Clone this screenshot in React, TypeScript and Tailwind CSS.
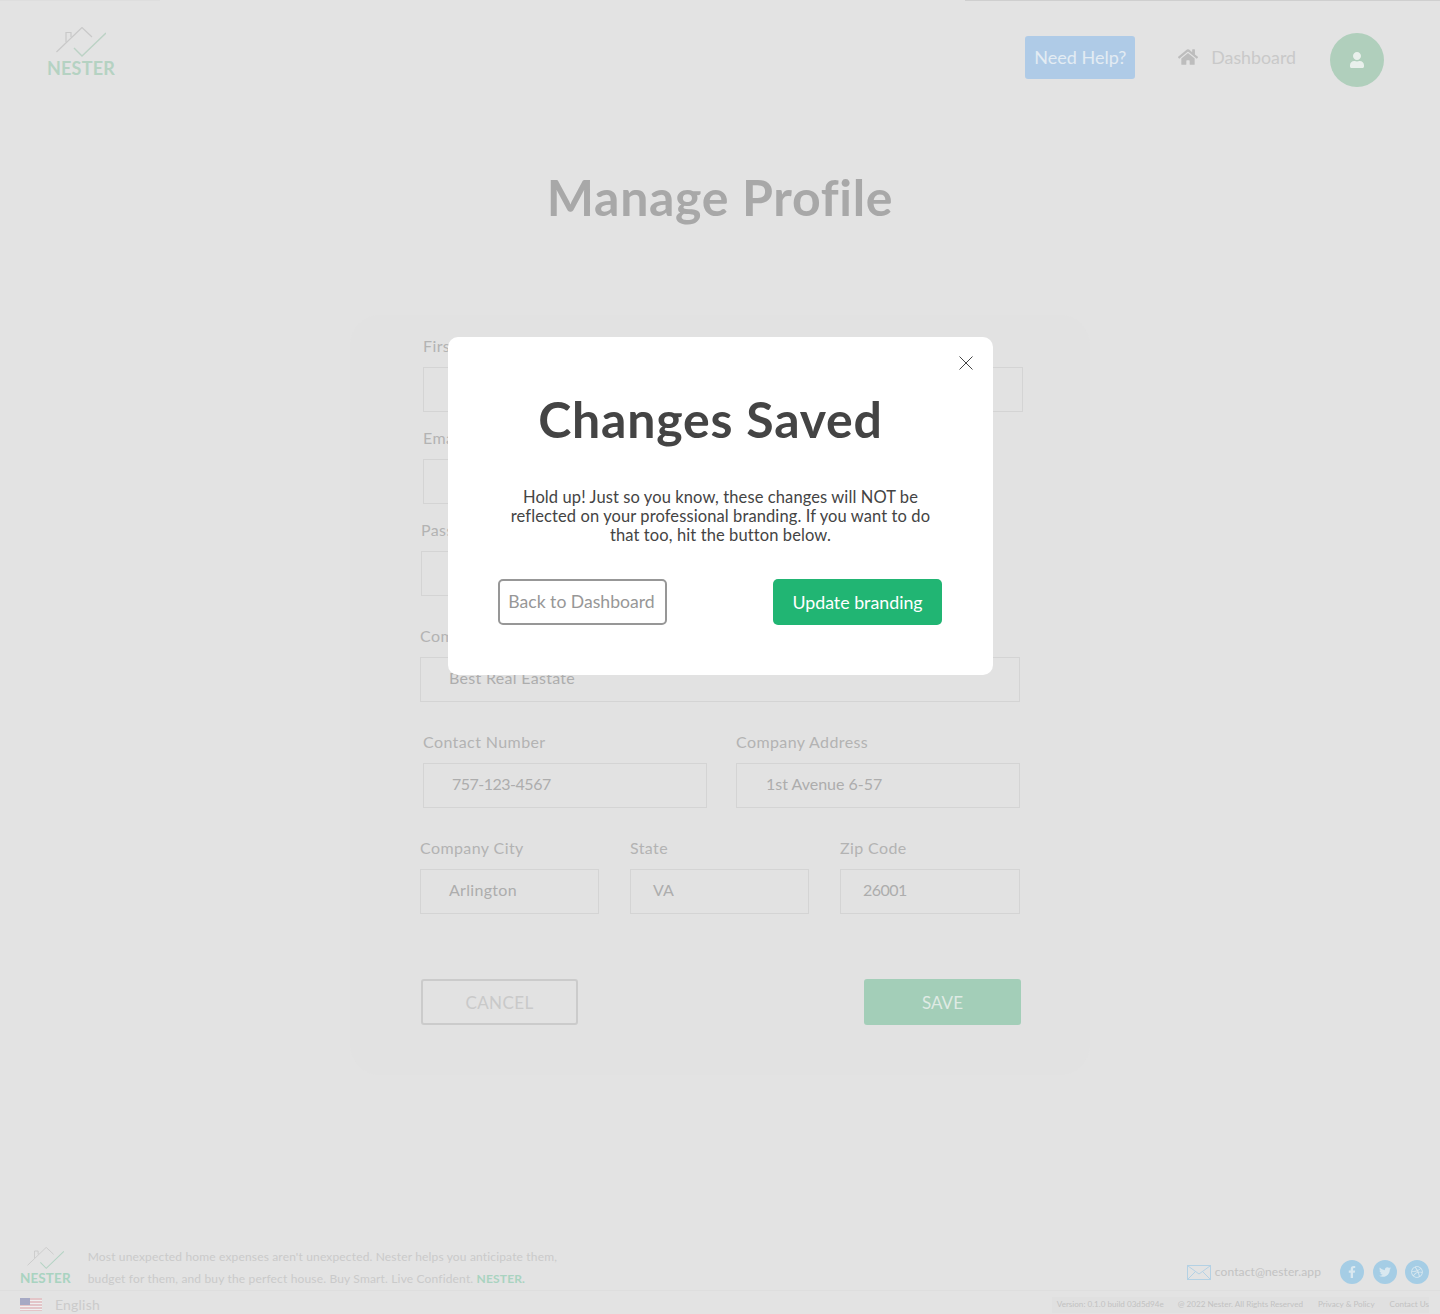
import React from 'react';
import { FaHome, FaUser, FaFacebookF, FaTwitter, FaDribbble } from 'react-icons/fa';

const Logo = ({ small }: { small?: boolean }) => (
  <div className="flex flex-col items-center">
    <svg
      viewBox="0 0 50 30"
      className={small ? 'h-[22px] w-[37px]' : 'h-[30px] w-[50px]'}
      fill="none"
      stroke="#c9c9c9"
      strokeWidth="1.2"
    >
      <path d="M0.5 25 L26 0.5 L36 10" />
      <path d="M10 15 V5.5 H15 V10" />
      <path d="M18 21 L26 29 L50 6" stroke={small ? '#b4d3c4' : '#bcd2c5'} strokeWidth="1.4" />
    </svg>
    <span
      className={
        small
          ? 'text-[13.5px] leading-[18px] font-bold tracking-[0.1px] text-[#a9d3c0]'
          : 'text-[18px] leading-[22px] font-bold tracking-[0.2px] text-[#b5d2c2]'
      }
    >
      NESTER
    </span>
  </div>
);

const Field = ({
  label,
  value,
  className,
  valueClassName,
}: {
  label: string;
  value?: string;
  className?: string;
  valueClassName?: string;
}) => (
  <div className={className}>
    <label className="block text-[16px] leading-[20px] tracking-[0.4px] text-[#b3b3b3]">{label}</label>
    <div
      className={
        'mt-[11px] flex h-[45px] items-center border border-[#d4d4d4] pb-[4px] text-[16px] text-[#adadad] ' +
        (valueClassName ?? 'pl-[28px] tracking-[0.3px]')
      }
    >
      {value}
    </div>
  </div>
);

const FlagIcon = () => (
  <svg viewBox="0 0 22 13" className="h-[13px] w-[22px]">
    <rect width="22" height="13" fill="#e3c5c8" />
    <path d="M0 2.5H22M0 5.5H22M0 8.5H22M0 11.5H22" stroke="#f0f0f0" strokeWidth="1" />
    <rect width="10" height="7" fill="#a6a9c4" />
  </svg>
);

const SocialDot = ({ children }: { children: React.ReactNode }) => (
  <span className="flex h-[24px] w-[24px] items-center justify-center rounded-full bg-[#a5cde5] text-[12px] text-[#d9e8f0]">
    {children}
  </span>
);

export default function App() {
  return (
    <div className="relative flex min-h-[1314px] flex-col overflow-hidden bg-[#e3e3e3] font-['Lato',sans-serif]">
      {/* Top edge lines */}
      <div className="flex h-px justify-between">
        <div className="w-[160px] bg-[#dedede]" />
        <div className="w-[475px] bg-[#cfcfcf]" />
      </div>

      {/* Header */}
      <header className="flex h-[119px] items-start justify-between pl-[47px] pr-[56px] pt-[26px]">
        <Logo />
        <div className="flex items-start">
          <button className="mt-[9px] h-[43px] w-[110px] rounded-[3px] bg-[#afcbe7] text-[18px] text-[#e3ecf3]">
            Need Help?
          </button>
          <div className="ml-[43px] mt-[18px] flex items-center gap-[13px] text-[17.8px] leading-[24px] text-[#c9c9c9]">
            <FaHome className="h-[20px] w-[20px] text-[#bdbdbd]" />
            Dashboard
          </div>
          <div className="ml-[34px] mt-[6px] flex h-[54px] w-[54px] items-center justify-center rounded-full bg-[#b0cfbc] text-[16px] text-[#e9f0ec]">
            <FaUser />
          </div>
        </div>
      </header>

      <h1 className="mt-[44px] text-center text-[50px] leading-[66px] font-bold tracking-[0.7px] text-[#a8a8a8]">
        Manage Profile
      </h1>

      {/* Profile form card */}
      <main className="mx-auto mt-[85px] h-[760px] w-[740px] rounded-[30px] bg-[#e2e2e2] pl-[70px] pr-[70px] pt-[21px]">
        <div className="ml-[3px] grid w-[600px] grid-cols-[284px_287px] gap-x-[29px]">
          <Field label="First Name" />
          <Field label="Last Name" />
        </div>
        <Field label="Email" className="ml-[3px] mt-[16px] w-[284px]" />
        <Field label="Password" className="ml-[1px] mt-[16px] w-[284px]" />
        <Field label="Company Name" value="Best Real Eastate" className="mt-[30px] w-[600px]" />
        <div className="ml-[3px] mt-[30px] grid w-[597px] grid-cols-2 gap-x-[29px]">
          <Field label="Contact Number" value="757-123-4567" valueClassName="pl-[28px] tracking-[-0.5px]" />
          <Field label="Company Address" value="1st Avenue 6-57" valueClassName="pl-[29px] tracking-[0px]" />
        </div>
        <div className="mt-[30px] grid w-[600px] grid-cols-[179px_179px_180px] gap-x-[31px]">
          <Field label="Company City" value="Arlington" />
          <Field label="State" value="VA" valueClassName="pl-[22px]" />
          <Field label="Zip Code" value="26001" valueClassName="pl-[22px] tracking-[-0.5px]" />
        </div>
        <div className="ml-[1px] mt-[65px] flex w-[600px] justify-between">
          <button className="h-[46px] w-[157px] rounded-[3px] border-2 border-[#cbcbcb] pt-[1px] text-[17px] tracking-[0.4px] text-[#c9c9c9]">
            CANCEL
          </button>
          <button className="h-[46px] w-[157px] rounded-[3px] bg-[#a3ceb8] pt-[1px] text-[17px] text-[#dfeae4]">
            SAVE
          </button>
        </div>
      </main>

      {/* Footer */}
      <footer className="mt-auto">
        <div className="flex h-[50px] items-start justify-between pl-[20px] pr-[11px]">
          <div className="flex items-start gap-[17px] pt-[6px]">
            <div className="pt-[1px]">
              <Logo small />
            </div>
            <p className="text-[12px] leading-[22px] tracking-[0.16px] text-[#cacaca]">
              Most unexpected home expenses aren't unexpected. Nester helps you anticipate them,
              <br />
              budget for them, and buy the perfect house. Buy Smart. Live Confident.{' '}
              <span className="font-bold text-[#a9d3c0]">NESTER.</span>
            </p>
          </div>
          <div className="flex items-center pt-[20px]">
            <svg viewBox="0 0 24 15" className="h-[15px] w-[24px]" fill="none" stroke="#b4d1e4" strokeWidth="1">
              <rect x="0.5" y="0.5" width="23" height="14" />
              <path d="M1 1 L12 9 L23 1 M1 14 L8 7 M23 14 L16 7" />
            </svg>
            <span className="ml-[4px] text-[12px] tracking-[0.1px] text-[#c2c2c2]">contact@nester.app</span>
            <div className="ml-[19px] flex gap-[8.5px]">
              <SocialDot>
                <FaFacebookF />
              </SocialDot>
              <SocialDot>
                <FaTwitter />
              </SocialDot>
              <SocialDot>
                <FaDribbble />
              </SocialDot>
            </div>
          </div>
        </div>
        <div className="flex h-[24px] items-center justify-between border-t border-[#dedede] pl-[20px] pr-[11px] pt-[4px]">
          <div className="flex items-center gap-[13px] text-[14px] tracking-[0.2px] text-[#cbcbcb]">
            <FlagIcon />
            English
          </div>
          <div className="flex h-[16px] items-center bg-[#e0e0e0] pl-[5px] text-[8.1px] text-[#c2c2c2]">
            <span>Version: 0.1.0 build 03d5d94e</span>
            <span className="ml-[14px]">@ 2022 Nester. All Rights Reserved</span>
            <span className="ml-[15px]">Privacy &amp; Policy</span>
            <span className="ml-[15px]">Contact Us</span>
          </div>
        </div>
      </footer>

      {/* Confirmation modal */}
      <div className="absolute left-[448px] top-[337px] h-[338px] w-[545px] rounded-[10px] bg-white">
        <svg viewBox="0 0 14 14" className="absolute right-[20px] top-[19px] h-[14px] w-[14px]" fill="none" stroke="#444444" strokeWidth="1">
          <path d="M0.5 0.5 L13.5 13.5 M13.5 0.5 L0.5 13.5" />
        </svg>
        <h2 className="mt-[49px] pr-[20px] text-center text-[50px] leading-[66px] font-bold tracking-[0.8px] text-[#444444]">
          Changes Saved
        </h2>
        <p className="mx-auto mt-[36px] w-[440px] text-center text-[16.5px] leading-[19px] tracking-[0.1px] text-[#444444]">
          Hold up! Just so you know, these changes will NOT be reflected on your professional branding. If you want to
          do that too, hit the button below.
        </p>
        <div className="mt-[34px] flex justify-between pl-[50px] pr-[51px]">
          <button className="h-[46px] w-[169px] rounded-[5px] border-2 border-[#979797] pr-[2px] pt-[1px] text-[17.6px] text-[#979797]">
            Back to Dashboard
          </button>
          <button className="h-[46px] w-[169px] rounded-[5px] bg-[#21b573] text-[17.8px] text-white">
            Update branding
          </button>
        </div>
      </div>
    </div>
  );
}
